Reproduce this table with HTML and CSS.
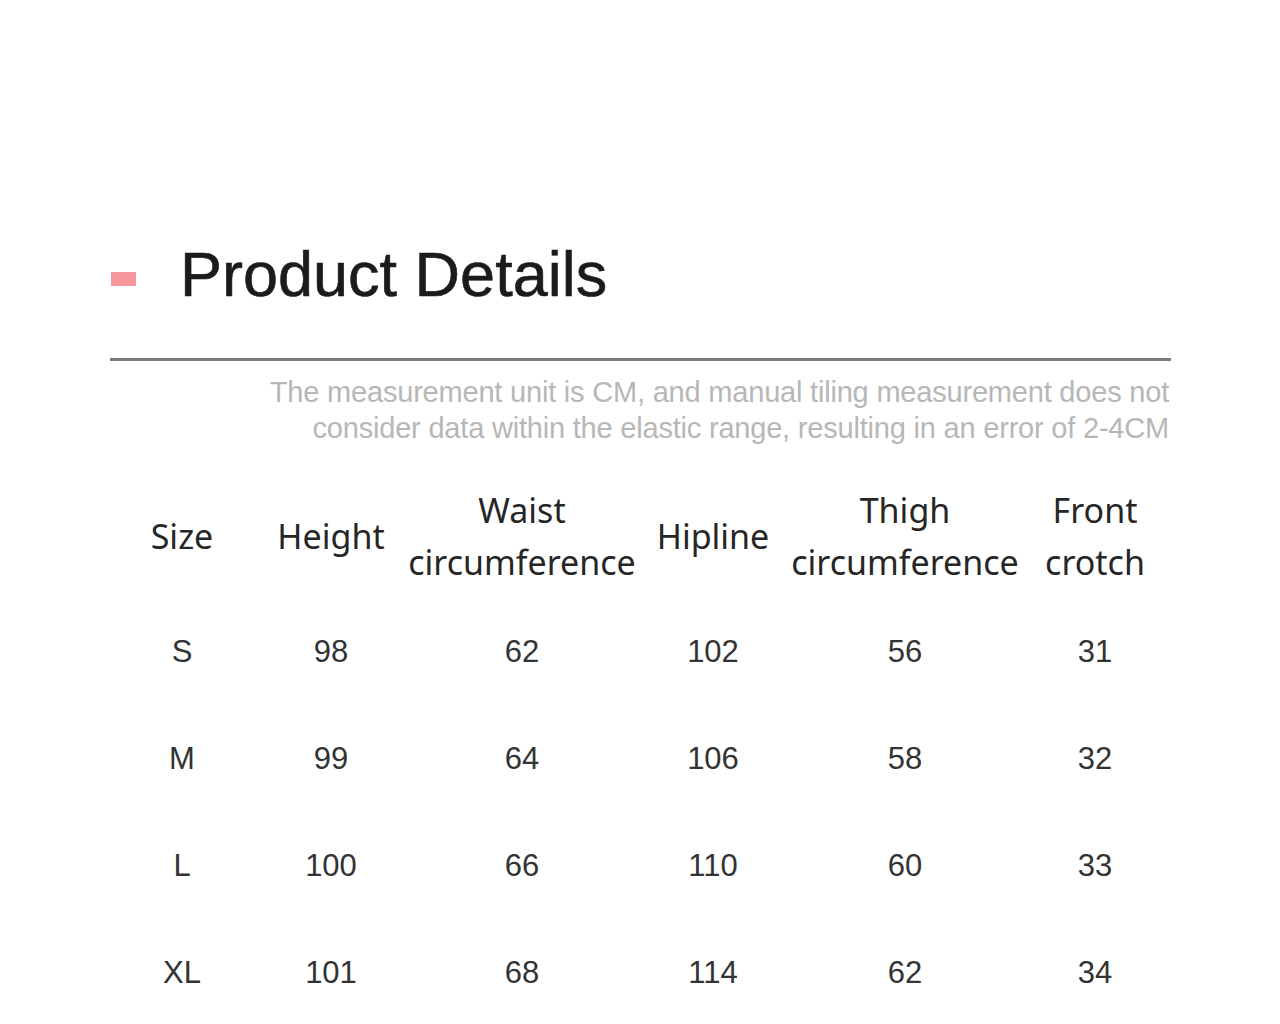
FILE: index.html
```html
<!DOCTYPE html>
<html lang="en">
<head>
<meta charset="utf-8">
<title>Product Details</title>
<link rel="stylesheet" href="styles.css">
</head>
<body>
<main class="page">
  <header class="title-row">
    <span class="marker"></span>
    <h1 class="title">Product Details</h1>
  </header>
  <hr class="rule">
  <p class="note">The measurement unit is CM, and manual tiling measurement does not<br>consider data within the elastic range, resulting in an error of 2-4CM</p>
  <section class="table">
    <div class="head">
      <div class="hc">Size</div>
      <div class="hc">Height</div>
      <div class="hc">Waist<br>circumference</div>
      <div class="hc">Hipline</div>
      <div class="hc">Thigh<br>circumference</div>
      <div class="hc">Front<br>crotch</div>
    </div>
    <div class="row"><div>S</div><div>98</div><div>62</div><div>102</div><div>56</div><div>31</div></div>
    <div class="row"><div>M</div><div>99</div><div>64</div><div>106</div><div>58</div><div>32</div></div>
    <div class="row"><div>L</div><div>100</div><div>66</div><div>110</div><div>60</div><div>33</div></div>
    <div class="row"><div>XL</div><div>101</div><div>68</div><div>114</div><div>62</div><div>34</div></div>
  </section>
</main>
</body>
</html>
```
FILE: styles.css
```css
html, body {
  margin: 0;
  padding: 0;
  background: #ffffff;
}

.page {
  width: 1061px;
  margin-left: 110px;
  padding-top: 243px;
}

.title-row {
  display: flex;
  align-items: flex-start;
  gap: 44px;
}

.marker {
  flex: none;
  width: 25px;
  height: 14px;
  margin-top: 29px;
  margin-left: 1px;
  background: #f7979d;
}

.title {
  margin: 0;
  font-family: "Liberation Sans", Arial, sans-serif;
  font-weight: 400;
  font-size: 63px;
  line-height: 62px;
  color: #1b1b1b;
  letter-spacing: 0;
  -webkit-text-stroke: 0.6px #1b1b1b;
}

.rule {
  margin: 53px 0 0 0;
  border: 0;
  height: 3px;
  background: #7b7b7b;
}

.note {
  margin: 13px 2px 0 0;
  text-align: right;
  font-family: "Liberation Sans", Arial, sans-serif;
  font-size: 29px;
  line-height: 36px;
  color: #b7b7b7;
  letter-spacing: -0.2px;
}

.table {
  margin-top: 38px;
  margin-left: -3px;
}

.head,
.row {
  display: grid;
  grid-template-columns: 150px 148px 234px 148px 236px 144px;
  align-items: center;
  text-align: center;
}

.head {
  height: 104px;
  font-family: "Noto Sans", "Open Sans", sans-serif;
  font-size: 34px;
  line-height: 52px;
  color: #262626;
}

.row {
  height: 107px;
  font-family: "Liberation Sans", Arial, sans-serif;
  font-size: 31px;
  color: #333333;
}

.head + .row {
  margin-top: 10px;
}
```
